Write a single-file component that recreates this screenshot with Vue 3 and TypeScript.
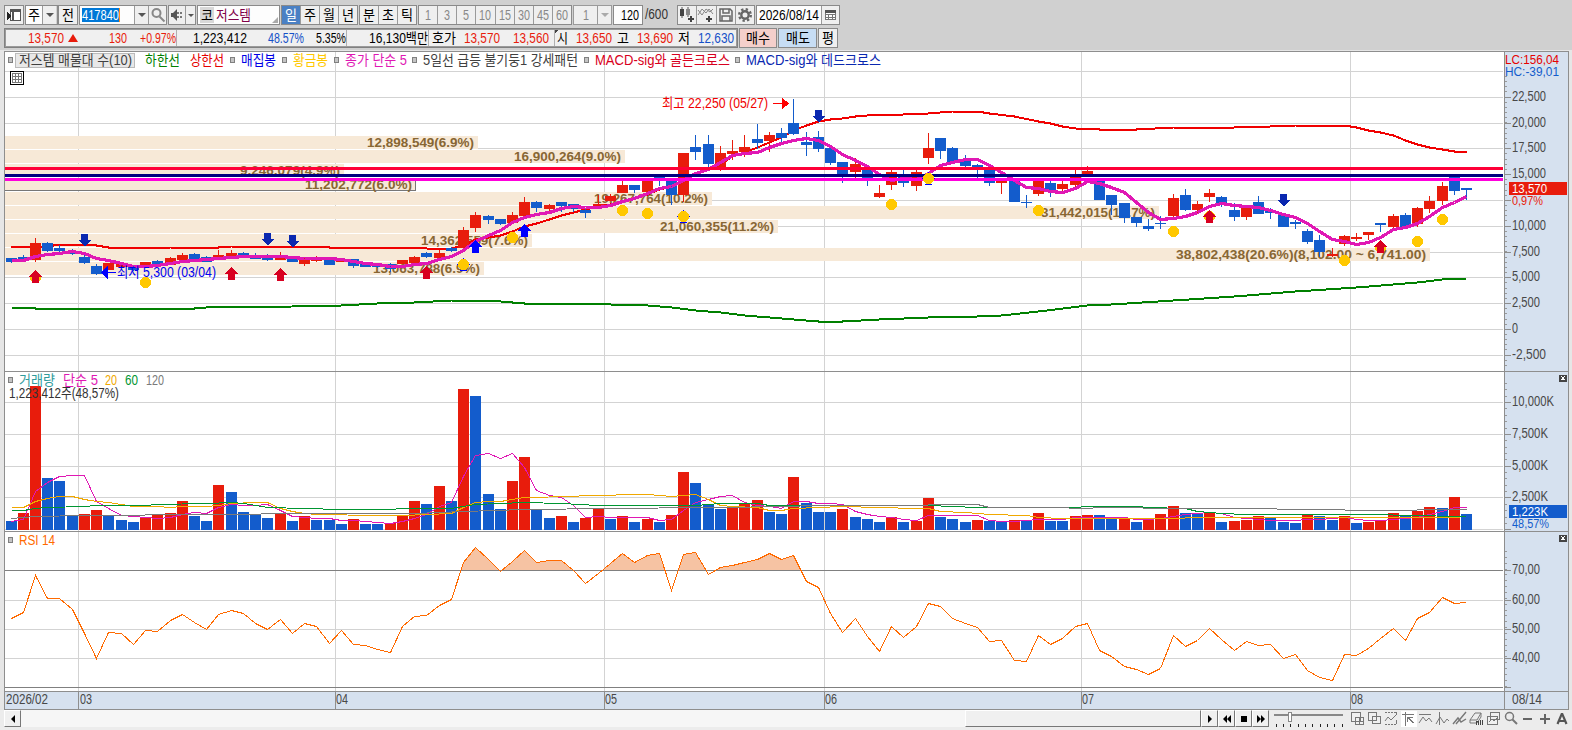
<script setup lang="ts">
import { h } from 'vue'

/* Single line of text fitted to an exact width, as the terminal's narrow bitmap font is. */
const Txt = (p: { t: string; w: number; s?: number }) =>
  h('svg', { width: p.w, height: 16, viewBox: `0 0 ${p.w} 16`, style: 'display:block;flex:none;overflow:visible' }, [
    h('text', { x: 0, y: 13, 'font-size': p.s ?? 14, fill: 'currentColor', textLength: p.w, lengthAdjust: 'spacingAndGlyphs' }, p.t),
  ])
Txt.props = ['t', 'w', 's']

const STEP = 12.232
const left = (i: number) => 6 + Math.floor(STEP * i)
const mid = (i: number) => left(i) + 5.5

type Candle = [string, number, number, number, number]
/* direction, high, body top, body bottom, low (chart y) */
const candles: Candle[] = `b258,258,262,263 b255,257,260,260 r238,243,260,262 b242,243,251,252 b245,248,251,254 b249,252,254,255
b255,257,263,264 b264,266,274,275 r263,263,270,270 r263,263,267,267 b266,266,270,271 r262,262,266,266 b260,261,264,265 r257,258,265,265
r253,255,260,260 b253,254,260,261 b256,257,262,262 r250,255,258,258 r250,253,258,258 b252,253,255,257 b253,255,259,259 b254,255,260,261
r252,256,260,260 b256,256,262,262 r257,257,264,266 r256,257,261,262 b259,259,265,265 r259,259,262,262 b259,259,266,268 b263,263,267,267
b264,265,267,268 b263,264,269,272 r260,260,264,264 r256,257,263,263 b252,253,257,258 r250,253,258,258 b247,248,251,252 r227,230,248,250
r212,215,228,232 b215,216,220,224 b219,219,224,225 r212,215,223,223 r197,202,216,217 b201,202,208,212 r204,205,209,212 b202,202,206,212
b204,204,209,212 b209,210,213,218 r195,204,206,207 r194,196,201,201 r181,185,193,193 b185,185,190,193 r181,181,192,192 b177,177,178,186
b180,181,195,205 r153,153,195,202 b135,147,152,160 b135,144,164,167 r146,153,168,171 r140,151,154,160 r135,147,152,157 b124,139,143,149
r132,135,141,152 b128,133,138,143 b99,123,134,135 b132,142,145,156 b131,137,149,152 b148,148,163,165 b162,162,176,183 r158,164,172,178
b170,170,178,186 r185,193,197,198 r169,172,185,190 b169,176,183,187 r169,172,186,191 r133,148,158,164 b138,138,151,159 b147,148,162,162
b155,161,166,168 b164,165,167,178 b168,168,183,186 r181,181,183,194 b181,181,202,202 b195,202,203,208 r178,181,194,196 b181,183,191,197
r181,184,189,192 r169,176,185,188 r166,171,174,177 b181,181,200,200 b195,195,205,215 b203,203,218,223 b217,217,223,227 b219,226,229,231
b216,223,224,229 r194,198,216,217 b189,195,210,211 r201,204,210,213 r189,193,197,202 b196,197,205,207 b203,210,217,221 r205,207,217,220
b196,202,214,214 b208,210,213,219 b214,215,227,227 b220,222,224,229 b229,231,242,244 b235,240,252,257 r248,254,256,257 r235,236,244,246
r233,237,239,241 r232,232,235,240 b223,223,225,232 r214,216,227,229 b213,215,227,227 r207,208,224,227 r196,201,209,213 r182,186,201,205
b175,177,191,195 b188,188,190,200`
  .split(/\s+/)
  .map((s) => [s[0], ...s.slice(1).split(',').map(Number)] as Candle)

const volumeTops = `521 513 386 478 481 516 514 510 515 520 522 517 515 513 501 516 521 485 492 512 514 518 514 521 516 520 520 524 519 524 524 523
515 501 504 486 501 389 396 494 509 481 457 510 518 516 522 518 508 519 516 522 519 522 515 472 483 504 509 507 504 500 512 514 477 503 512 512
509 517 519 522 517 522 521 498 517 519 522 520 521 522 520 520 513 521 521 516 515 515 519 518 522 519 514 506 513 514 512 522 521 520 516 518
522 523 515 516 520 516 523 522 520 513 515 511 507 508 497 514`
  .split(/\s+/)
  .map(Number)

/* "index:y index:y ..." -> polyline points */
const series = (s: string) =>
  s.trim().split(/\s+/).map((p) => { const [i, y] = p.split(':').map(Number); return `${mid(i)},${y + 0.5}` }).join(' ')
const dense = (s: string) => s.trim().split(/\s+/).map(Number)
const path = (a: number[]) => a.map((y, i) => `${mid(i)},${y + 0.5}`).join(' ')

const ma5 = path(dense(`260 260 256 254 253 251 253 258 260 263 266 266 265 263 261 260 259 258 257 256 256 256 256 257 258 258 258 259 261 263
264 266 266 264 263 259 256 250 241 235 230 222 217 214 212 208 206 207 207 205 201 198 193 188 186 180 173 169 162 155 153 152 147 143 140 138
140 146 154 160 166 174 180 178 179 173 165 162 159 159 165 172 180 187 188 191 192 188 181 183 187 192 202 212 219 218 216 212 206 203 205 206
207 210 214 217 223 231 239 241 244 242 237 229 227 223 216 207 202 196`))
const upper = series(`0:247 3:246 4:244 6:244 7:245 8:247 10:247 11:248 13:247 17:247 18:246 25:246 26:247 31:247 34:248 35:249 36:248 37:245 38:239
39:237 40:235 41:231 42:226 43:223 44:219 45:215 46:212 47:209 48:206 49:204 50:201 51:198 52:194 53:189 54:186 55:181 56:173 57:169 58:164 59:156
60:152 61:147 62:142 63:137 64:130 65:125 66:121 67:119 68:118 69:116 70:115 73:114 75:113 77:111 79:111 80:113 82:116 84:121 85:123 86:126 87:128
89:129 92:129 95:127 100:127 103:126 105:125 109:125 110:127 111:130 112:132 113:135 114:140 115:144 116:147 117:149 118:151 119:151`)
const lower = series(`0:307 1:307 2:308 15:308 16:307 23:306 27:305 30:303 33:302 36:300 38:300 40:301 42:303 47:303 49:304 52:305 54:307 56:310
58:312 60:315 62:317 64:319 66:321 68:321 71:319 75:317 79:316 81:315 84:311 88:305 90:304 95:300 100:296 105:291 110:287 115:282 117:279 119:278`)
const vma5 = path(dense(`521 519 491 482 476 475 475 501 508 515 516 517 518 517 514 512 513 507 504 505 505 504 510 516 517 518 518 520 520 521
522 523 521 518 514 506 502 476 455 453 458 453 467 490 495 497 505 517 516 517 517 517 517 520 519 510 502 499 496 495 502 505 506 508 501 501
503 503 504 511 514 516 517 519 520 515 515 515 515 515 520 521 521 520 519 519 519 517 517 517 517 517 519 519 518 516 514 513 512 513 517 518
519 520 520 520 519 519 518 517 519 520 520 519 518 517 514 511 507 507`))
const vma20 = series(`0:507 1:507 2:501 3:498 4:496 5:496 6:499 7:501 8:502 9:504 10:506 12:506 13:507 14:506 16:506 17:505 18:503 20:502 21:502
22:508 23:511 24:513 25:514 30:515 32:515 36:513 37:507 38:502 39:501 40:501 41:499 42:497 46:496 47:495 52:494 53:495 54:496 56:494 57:499 58:505
59:506 61:507 62:510 63:510 64:508 66:507 68:506 74:508 75:508 76:511 78:512 80:514 83:515 84:517 86:518 95:518 97:517 113:517 118:517 119:516`)
const vma60 = series(`0:510 1:510 2:508 3:507 6:506 7:505 11:505 12:504 16:503 18:502 19:503 20:505 21:507 24:508 27:509 36:508 38:504 42:502 45:503
48:505 56:505 58:503 61:503 62:505 66:505 75:505 79:507 87:507 88:506 92:506 93:507 96:508 97:511 99:513 101:514 112:514 114:515 119:516`)
const vma120 = series(`0:518 2:516 6:515 16:514 25:513 33:513 37:511 42:509 49:508 57:507 64:506 65:505 74:505 76:504 79:504 80:507 86:507 87:508
90:507 95:508 103:508 104:509 108:509 110:510 114:510 116:509 119:509`)
const rsiValues = dense(`618 612 575 598 598 609 633 658 632 633 644 630 631 620 614 622 629 614 610 613 623 629 619 633 623 626 643 630 644 645 649
652 626 616 615 605 599 562 547 559 571 561 550 562 560 560 570 583 573 563 553 562 555 553 590 554 552 574 567 565 562 559 553 559 555 581 587 613
632 618 636 651 626 637 626 603 606 618 623 627 641 640 660 661 635 644 638 626 623 650 656 666 669 674 668 635 646 640 628 639 650 641 645 644 658
654 670 677 680 654 655 648 638 628 640 618 612 597 603 602`)
const rsi = path(rsiValues)
const rsiArea = `${mid(0)},760 ${rsi} ${mid(119)},760`

const bands: [number, number, string, number, number][] = [
  [136, 478, '12,898,549(6.9%)', 367, 107],
  [150, 625, '16,900,264(9.0%)', 514, 107],
  [164, 344, '9,246,079(4.9%)', 240, 100],
  [178, 415, '11,202,772(6.0%)', 305, 107],
  [192, 712, '19,267,764(10.2%)', 594, 114],
  [206, 1159, '31,442,015(16.7%)', 1041, 114],
  [220, 778, '21,060,355(11.2%)', 660, 114],
  [234, 532, '14,362,559(7.6%)', 421, 107],
  [248, 1430, '38,802,438(20.6%)(8,102.00 ~ 6,741.00)', 1176, 250],
  [262, 484, '13,063,788(6.9%)', 373, 107],
]
const dots: [number, number][] = [[2, 277], [98, 216], [112, 247], [11, 282], [37, 264], [41, 237], [50, 210], [52, 213], [55, 216], [72, 204], [75, 178], [84, 210], [95, 231], [109, 260], [115, 241], [117, 219]]
const dotShadows: [number, number][] = [[37, 264], [55, 216], [75, 178]]
const ups: [number, number, string][] = [[2, 270, 'gold'], [18, 267, 'gold'], [22, 268, 'gold'], [34, 266, 'gold'], [98, 210, 'gold'], [112, 240, 'gold'], [38, 240, 'buy'], [42, 224, 'buy']]
const downs: [number, number][] = [[6, 234], [21, 233], [23, 235], [66, 110], [104, 194]]
const verticals = [78, 335, 604, 824, 1081, 1350]
const months: [number, string][] = [[80, '03'], [336, '04'], [605, '05'], [825, '06'], [1082, '07'], [1351, '08']]
const priceAxis: [number, string][] = [[97, '22,500'], [123, '20,000'], [148, '17,500'], [174, '15,000'], [200, ''], [226, '10,000'], [252, '7,500'], [277, '5,000'], [303, '2,500'], [329, '0'], [355, '-2,500']]
const volAxis: [number, string][] = [[402, '10,000K'], [434, '7,500K'], [466, '5,000K'], [497, '2,500K'], [529, '']]
const rsiAxis: [number, string][] = [[570, '70,00'], [600, '60,00'], [629, '50,00'], [658, '40,00'], [687, '']]
const steps = (a: number, b: number, d: number) => Array.from({ length: Math.floor((b - a) / d) + 1 }, (_, i) => Math.round(a + i * d))
const minorTicks = [...steps(76, 367, 5.16), ...steps(383, 525, 6.36), ...steps(551, 687, 5.85)]
const labelWidth = (t: string) => [...t].reduce((n, c) => n + (c === ',' ? 4 : c === 'K' ? 8 : 6), 0)

const legend: [number, number, string, string][] = [
  [19, 113, '저스템 매물대 수(10)', '#404040'], [145, 35, '하한선', '#008000'], [190, 34, '상한선', '#e60000'], [241, 35, '매집봉', '#0000e6'],
  [293, 35, '황금봉', '#ffc800'], [345, 62, '종가 단순 5', '#e018b4'], [423, 155, '5일선 급등 불기둥1 강세패턴', '#404040'],
  [595, 135, 'MACD-sig와 골든크로스', '#d80020'], [746, 135, 'MACD-sig와 데드크로스', '#0a28b0'],
]
const squares: [number, number][] = [[8, 57], [230, 57], [282, 57], [334, 57], [412, 57], [584, 57], [735, 57], [8, 377], [8, 537]]
const volLegend: [number, number, string, string][] = [[19, 36, '거래량', '#2f9c9c'], [63, 35, '단순 5', '#e018b4'], [105, 12, '20', '#f0a800'], [125, 13, '60', '#009632'], [146, 18, '120', '#7a7a7a']]
const minutes = ['1', '3', '5', '10', '15', '30', '45', '60']
</script>

<template>
  <div class="app">
    <header class="tools">
      <div class="row">
        <div class="grp btn w20">
          <svg width="18" height="18" shape-rendering="crispEdges"><path d="M5.500 4.500h10v10h-10z" fill="#fff" stroke="#555" /><path d="M5 3h11v3H5zM7 3h2v12H7z" fill="#555" /><path d="M2 6l5 4-5 4z" fill="#222" /></svg>
        </div>
        <div class="grp m1 w33"><span class="cell white w17"><Txt t="주" :w="12" /></span><span class="cell btn w14"><i class="dn" /></span></div>
        <div class="grp btn w20"><Txt t="전" :w="12" /></div>
        <div class="grp m1 w87">
          <span class="cell white code"><span class="sel"><Txt t="417840" :w="37" /></span></span>
          <span class="cell btn w14"><i class="dn" /></span>
          <span class="cell btn w18"><svg width="16" height="16" fill="none" stroke="#888" stroke-width="2"><circle cx="6.500" cy="6" r="4" /><path d="M9.500 9.500l5 5" /></svg></span>
        </div>
        <div class="grp m2 w27">
          <span class="cell btn w17"><svg width="16" height="16"><path d="M2 6h2l4-4v12l-4-4H2z" fill="#555" /><path d="M9 5v2M12 5v2M9 9v2M12 9v2" stroke="#777" stroke-width="2" /></svg></span>
          <span class="cell btn w10"><i class="dn small" /></span>
        </div>
        <div class="grp white m2 name"><span class="kosdaq"><Txt t="코" :w="12" /></span><Txt class="maroon" t="저스템" :w="35" /><i class="corner" /></div>
        <div class="grp m1 w77"><span class="cell btn on"><Txt t="일" :w="12" /></span><span v-for="p in ['주', '월', '년']" :key="p" class="cell btn"><Txt :t="p" :w="12" /></span></div>
        <div class="grp m1 w58"><span v-for="p in ['분', '초', '틱']" :key="p" class="cell btn"><Txt :t="p" :w="12" /></span></div>
        <div class="grp m1 w154"><span v-for="m in minutes" :key="m" class="cell btn dim"><Txt :t="m" :w="m.length * 6" /></span></div>
        <div class="grp m1 w39 dim"><span class="cell btn"><Txt t="1" :w="6" /></span><span class="cell btn w14"><i class="dn pale" /></span></div>
        <div class="grp white m1 w30 end"><Txt t="120" :w="18" /></div>
        <Txt class="total" t="/600" :w="23" />
        <div class="grp tray">
          <span class="cell btn"><svg width="18" height="18"><path d="M4 1v11M10 1v10" stroke="#555" /><path d="M2 3h4v7H2z" fill="#444" /><path d="M8 3h4v6H8z" fill="#888" /><path d="M10 13h6M13 10v6" stroke="#444" stroke-width="2" /></svg></span>
          <span class="cell btn"><svg width="18" height="18" fill="none" stroke="#888"><path d="M1 9l4-6 4 4 3-4 4 5M1 4l4 5 4-6 4 3 3-3" /><path d="M9 13h6M12 10v6" stroke="#444" stroke-width="2" /></svg></span>
          <span class="cell btn"><svg width="16" height="16" fill="none" stroke="#666" stroke-width="1.500"><path d="M2 2h10l2 2v10H2zM5 2v4h6V2M4 14V9h8v5" /></svg></span>
          <span class="cell btn"><svg width="16" height="16" fill="none" stroke="#666"><circle cx="8" cy="8" r="5.800" stroke-width="2.400" stroke-dasharray="2.300 2.250" /><circle cx="8" cy="8" r="3.700" stroke-width="2.400" /></svg></span>
        </div>
        <div class="grp m1 w84">
          <span class="cell white date"><Txt t="2026/08/14" :w="60" /></span>
          <span class="cell btn"><svg width="12" height="12" shape-rendering="crispEdges"><path d="M.5 2.500h10v8H.5zM.5 5.500h10M.5 8.500h10M3.500 5v6M7.500 5v6" fill="#fff" stroke="#777" /><path d="M0 1h11v3H0z" fill="#555" /></svg></span>
        </div>
      </div>

      <div class="row">
        <div class="quote">
          <span class="q q1 up"><Txt t="13,570" :w="36" /><i class="tri" /></span>
          <span class="q q2 up"><Txt t="130" :w="18" /></span>
          <span class="q q3 up line"><Txt t="+0.97%" :w="36" /></span>
          <span class="q q4"><Txt t="1,223,412" :w="54" /></span>
          <span class="q q5 down"><Txt t="48.57%" :w="36" /></span>
          <span class="q q6 line"><Txt t="5.35%" :w="30" /></span>
          <span class="q q7 line"><Txt t="16,130백만" :w="59" /></span>
          <span class="q q8"><Txt t="호가" :w="24" /></span>
          <span class="q q9 up"><Txt t="13,570" :w="36" /></span>
          <span class="q q10 up line"><Txt t="13,560" :w="36" /></span>
          <span class="q q11 mark"><Txt t="시" :w="11" /></span>
          <span class="q q12 up"><Txt t="13,650" :w="36" /></span>
          <span class="q q13"><Txt t="고" :w="12" /></span>
          <span class="q q14 up"><Txt t="13,690" :w="36" /></span>
          <span class="q q15"><Txt t="저" :w="12" /></span>
          <span class="q q16 down"><Txt t="12,630" :w="36" /></span>
        </div>
        <div class="grp act buy"><Txt t="매수" :w="24" /></div>
        <div class="grp act sell"><Txt t="매도" :w="24" /></div>
        <div class="grp act btn w20"><Txt t="평" :w="12" /></div>
      </div>
    </header>

    <svg class="chart" width="1572" height="660" viewBox="0 50 1572 660">
      <defs>
        <clipPath id="over"><rect x="5" y="532" width="1498" height="38" /></clipPath>
      </defs>
      <g shape-rendering="crispEdges">
        <rect x="0" y="50" width="1572" height="660" fill="#e6e6e6" />
        <rect x="5" y="52" width="1564" height="640" fill="#fff" />
        <rect x="1504" y="52" width="65" height="640" fill="#d6e1ef" />
        <rect x="5" y="692" width="1564" height="18" fill="#d6e1ef" />
        <g fill="#d3d3d3">
          <rect x="5" y="71" width="1498" height="1" />
          <rect v-for="[y] in [...priceAxis, ...volAxis, ...rsiAxis]" :key="y" x="5" :y="y" width="1498" height="1" />
          <rect v-for="x in verticals" :key="x" :x="x" y="52" width="1" height="640" />
        </g>
        <rect v-for="b in bands" :key="b[0]" x="5" :y="b[0] - 1" :width="b[1] - 5" height="15" fill="#fff" />
        <g fill="#d3d3d3"><rect v-for="x in verticals" :key="x" :x="x" y="135" width="1" height="141" /></g>
        <rect v-for="b in bands" :key="b[0]" x="5" :y="b[0]" :width="b[1] - 5" height="13" fill="#f7e9d7" />
        <path d="M5 190.500H415.500V180" fill="none" stroke="#777" />
      </g>
      <text v-for="b in bands" :key="b[0]" class="vp" :x="b[3]" :y="b[0] + 11" :textLength="b[4]" lengthAdjust="spacingAndGlyphs">{{ b[2] }}</text>

      <g shape-rendering="crispEdges">
        <polyline :points="lower" fill="none" stroke="#008000" stroke-width="2" />
        <polyline :points="upper" fill="none" stroke="#f00000" stroke-width="2" />
        <g v-for="(c, i) in candles" :key="i" :fill="c[0] === 'r' ? '#e81c0c' : '#135ccc'">
          <rect :x="left(i) + 5" :y="c[1]" width="1" :height="c[4] - c[1]" />
          <rect :x="left(i)" :y="c[2]" width="11" :height="c[3] - c[2]" />
        </g>
        <polyline :points="ma5" fill="none" stroke="#e018b4" stroke-width="3.200" stroke-linejoin="round" />
        <g>
          <rect x="5" y="167" width="1498" height="3" fill="#ff0038" />
          <rect x="5" y="174" width="1498" height="3" fill="#000080" />
          <rect x="5" y="178" width="1498" height="3" fill="#ff00dc" />
        </g>
        <path v-for="d in dotShadows" :key="d[0]" :transform="`translate(${mid(d[0])} ${d[1]})`" d="M-6.500 .5h13M-3.500 6h7M0-6v2" stroke="#00f" />
        <circle v-for="d in dots" :key="d[0]" :cx="mid(d[0])" :cy="d[1] + 0.5" r="5.500" fill="#ffc800" />
        <path v-for="u in ups" :key="u[0]" :transform="`translate(${mid(u[0])} ${u[1]})`" d="M0 0L6.500 6.500H3.500V13H-3.500V6.500H-6.500z" :fill="u[2] === 'buy' ? '#00f' : '#d80020'" />
        <path v-for="d in downs" :key="d[0]" :transform="`translate(${mid(d[0])} ${d[1]})`" d="M-3.500 0H3.500V6H6.500L0 12.500L-6.500 6H-3.500z" fill="#0a28b0" />
        <path d="M107 272.500h9M102 272.500l5.500-5.500v11z" stroke="#00f" fill="#00f" stroke-width="1" />
        <path d="M773 103.500h10M788 103.500l-5.500-5v10z" stroke="#f00" fill="#f00" />
      </g>
      <text x="117" y="277" textLength="99" class="fit" fill="#0000f0" lengthAdjust="spacingAndGlyphs">최저 5,300 (03/04)</text>
      <text x="662" y="108" textLength="106" class="fit" fill="#f00000" lengthAdjust="spacingAndGlyphs">최고 22,250 (05/27)</text>

      <g shape-rendering="crispEdges">
        <rect v-for="(y, i) in volumeTops" :key="i" :x="left(i)" :y="y" width="11" :height="530 - y" :fill="i > 0 && y < volumeTops[i - 1] ? '#e81c0c' : '#135ccc'" />
        <g fill="none">
          <polyline :points="vma5" stroke="#e018b4" /><polyline :points="vma20" stroke="#f0a800" />
          <polyline :points="vma60" stroke="#009632" /><polyline :points="vma120" stroke="#7a7a7a" />
        </g>
        <polygon :points="rsiArea" fill="#f6c3a3" clip-path="url(#over)" />
        <path d="M5 570.500H1503M5 687.500H1503" stroke="#808080" />
        <polyline :points="rsi" fill="none" stroke="#ff6a00" />

        <path d="M4.500 710V51.500H1569M5 371.500H1569M5 531.500H1569M5 691.500H1569M5 709.500H1569M1504.500 51V710M1568.500 51V710" fill="none" stroke="#8e8e8e" />
        <path v-for="x in verticals" :key="x" :d="`M${x + 0.5} 691v18`" stroke="#8e8e8e" />
        <rect v-for="y in minorTicks" :key="y" x="1505" :y="y" width="2" height="1" fill="#999" />
        <rect v-for="[y] in [...priceAxis, ...volAxis, ...rsiAxis]" :key="y" x="1505" :y="y" width="6" height="1" fill="#8e8e8e" />
        <rect x="15.500" y="53.500" width="119" height="14" fill="#e8e8e8" stroke="#bbb" />
        <rect v-for="s in squares" :key="`${s[0]}-${s[1]}`" :x="s[0] + 0.500" :y="s[1] + 0.500" width="4" height="5" fill="#c4c4c4" stroke="#808080" />
        <path d="M10.500 71.500h13v13h-13z" fill="#fff" stroke="#000" />
        <path d="M12.500 73.500h9v9h-9zM12.500 76.500h9M12.500 79.500h9M15.500 73.500v9M18.500 73.500v9" fill="none" stroke="#777" />
        <rect x="1509" y="182" width="58" height="13" fill="#e81c0c" />
        <rect x="1509" y="505" width="58" height="13" fill="#135ccc" />
        <g v-for="y in [375, 535]" :key="y"><rect x="1559" :y="y" width="8" height="7" fill="#444" /><path :d="`M1561.500 ${y + 1.5}l3 3.500M1564.500 ${y + 1.5}l-3 3.500`" stroke="#fff" /></g>
      </g>

      <g class="fit">
        <text v-for="l in legend" :key="l[0]" :x="l[0]" y="65" :textLength="l[1]" lengthAdjust="spacingAndGlyphs" :fill="l[3]">{{ l[2] }}</text>
        <text v-for="l in volLegend" :key="l[0]" :x="l[0]" y="385" :textLength="l[1]" lengthAdjust="spacingAndGlyphs" :fill="l[3]">{{ l[2] }}</text>
        <text x="9" y="398" textLength="110" lengthAdjust="spacingAndGlyphs" fill="#333">1,223,412주(48,57%)</text>
        <text x="19" y="545" textLength="36" lengthAdjust="spacingAndGlyphs" fill="#ff6a00">RSI 14</text>
        <g fill="#484848">
          <template v-for="[y, t] in [...priceAxis, ...volAxis, ...rsiAxis]" :key="y">
            <text v-if="t" x="1512" :y="y + 4" :textLength="labelWidth(t)" lengthAdjust="spacingAndGlyphs">{{ t }}</text>
          </template>
          <text x="6" y="704" textLength="42" lengthAdjust="spacingAndGlyphs">2026/02</text>
          <text v-for="m in months" :key="m[0]" :x="m[0]" y="704" textLength="12" lengthAdjust="spacingAndGlyphs">{{ m[1] }}</text>
          <text x="1512" y="704" textLength="30" lengthAdjust="spacingAndGlyphs">08/14</text>
        </g>
      </g>
      <g class="tag">
        <text x="1505" y="64" textLength="54" lengthAdjust="spacingAndGlyphs" fill="#e60000">LC:156,04</text>
        <text x="1505" y="76" textLength="54" lengthAdjust="spacingAndGlyphs" fill="#135ccc">HC:-39,01</text>
        <text x="1512" y="193" textLength="35" lengthAdjust="spacingAndGlyphs" fill="#fff">13,570</text>
        <text x="1512" y="205" textLength="31" lengthAdjust="spacingAndGlyphs" fill="#e81c0c">0,97%</text>
        <text x="1512" y="516" textLength="36" lengthAdjust="spacingAndGlyphs" fill="#fff">1,223K</text>
        <text x="1512" y="528" textLength="37" lengthAdjust="spacingAndGlyphs" fill="#135ccc">48,57%</text>
      </g>
    </svg>

    <footer class="bar">
      <span class="sb"><svg width="8" height="8"><path d="M6 0v8L2 4z" /></svg></span>
      <span class="track"><span class="thumb" /></span>
      <span class="sb"><svg width="8" height="8"><path d="M2 0v8l4-4z" /></svg></span>
      <span class="sb"><svg width="10" height="8"><path d="M5 0v8L1 4zM9 0v8L5 4z" /></svg></span>
      <span class="sb"><svg width="8" height="8"><path d="M1 1h6v6H1z" /></svg></span>
      <span class="sb"><svg width="10" height="8"><path d="M1 0v8l4-4zM5 0v8l4-4z" /></svg></span>
      <svg class="slider" width="74" height="20" shape-rendering="crispEdges">
        <path d="M5 5h69" stroke="#888" stroke-width="2" />
        <path v-for="i in 10" :key="i" :d="`M${i * 7.3}  14v3`" stroke="#222" />
        <rect x="19.500" y="2.500" width="3" height="9" fill="#fff" stroke="#888" />
      </svg>
      <svg class="icons" width="228" height="20" fill="none" stroke="#777" shape-rendering="crispEdges">
        <rect x="58" y="1" width="16" height="16" fill="#fff" stroke="none" />
        <path d="M8.500 2.500h9v9h-9zM12.500 7.500h8v7h-8zM12.500 11h8M16.500 7.500v7" fill="#f0f0f0" />
        <path d="M25.500 2.500h8v8h-8zM29.500 6.500h8v7h-8z" fill="#f0f0f0" stroke-width="1.300" />
        <path d="M42 2.500h12M42 14.500h12" stroke-dasharray="2 1" /><path d="M42 11l3-4 3 3 5-5" shape-rendering="auto" /><path d="M53.500 2v3M53.500 10v4" />
        <path d="M59 4.500h12M62.500 2v14" /><path d="M64.500 7l6 6M64.500 7v5M64.500 7.500h5" stroke-width="1.400" />
        <path d="M76 4.500h12" /><path d="M76 13l4-6 3 4 3-3 3 4" shape-rendering="auto" />
        <path d="M96.500 2v13" /><path d="M93 14l4-7 4 6 3-4 2 2" shape-rendering="auto" />
        <path d="M110 14l5-6 3 4 5-3M113 14l10-12" shape-rendering="auto" stroke-width="1.400" />
        <path d="M127 10l5-7h6l-4 7zM127 10v3h7l4-6V3" shape-rendering="auto" /><path d="M133.500 15v-4h2v4M137.500 10v5M139.500 10v5" stroke="#444" />
        <path d="M147.500 2.500h9v7h-9zM144.500 6.500h10v8h-10z" fill="#f0f0f0" /><path d="M146 12l3-3 2 2 3-3" />
        <g shape-rendering="auto"><circle cx="166.500" cy="6.500" r="4" stroke-width="1.500" /><path d="M169.500 9.500l4.500 4.500" stroke-width="2" /></g>
        <path d="M180 9h9M197 9h10M202 4v10" stroke="#666" stroke-width="2" />
        <path d="M214.500 14l4.200-10h.6l4.200 10M216 11h6" stroke="#555" stroke-width="2.200" shape-rendering="auto" />
      </svg>
    </footer>
  </div>
</template>

<style>
body { margin: 0; background: #e6e6e6; }
</style>

<style scoped>
.app { width: 1572px; height: 730px; display: flex; flex-direction: column; overflow: hidden; background: #e6e6e6; font-family: "Liberation Sans", "Noto Sans CJK KR", sans-serif; color: #000; }
.tools { height: 45px; padding: 5px 0 0 4px; background: #d0d0d0; display: flex; flex-direction: column; gap: 3px; }
.row { display: flex; height: 20px; align-items: stretch; }
.grp { box-sizing: border-box; flex: none; display: flex; border: 1px solid #8a8a8a; align-items: stretch; }
.grp > svg { margin: auto; }
.cell { flex: 1; display: flex; align-items: center; justify-content: center; box-sizing: border-box; }
.cell + .cell { border-left: 1px solid #9a9a9a; }
.cell[class*="w1"] { flex: none; }
.btn { background: #efefef; }
.white { background: #fdfdfd; }
.on { background: #4a80c4; color: #fff; }
.dim { color: #888; }
.dim.grp { border-color: #9a9a9a; }
.w10 { width: 10px; } .w14 { width: 14px; } .w17 { width: 16px; } .w18 { width: 18px; } .w20 { width: 20px; } .w27 { width: 28px; } .w30 { width: 30px; }
.w33 { width: 33px; } .w39 { width: 39px; } .w58 { width: 58px; } .w77 { width: 77px; } .w84 { width: 84px; } .w87 { width: 88px; } .w154 { width: 154px; }
.m1 { margin-left: 1px; } .m2 { margin-left: 1px; }
.code { justify-content: flex-start; padding-left: 2px; }
.sel { background: #0078d7; color: #fff; height: 14px; display: flex; align-items: center; border-right: 1px solid #ff8c1a; }
.dn { width: 0; border: 4px solid transparent; border-top-color: #555; border-bottom: 0; }
.dn.small { border-width: 3px; border-bottom: 0; }
.dn.pale { border-top-color: #aaa; }
.name { width: 83px; align-items: center; position: relative; }
.name > svg { margin: 0 0 0 2px; }
.kosdaq { background: #d8d8d8; padding: 0 1px; margin-left: 2px; height: 16px; }
.maroon { color: #800048; }
.corner { position: absolute; right: 1px; bottom: 1px; border: 3px solid transparent; border-right-color: #aaa; border-bottom-color: #aaa; }
.end { align-items: center; }
.end > svg { margin: 0 3px 0 auto; }
.total { margin: 1px 9px 0 2px; color: #333; }
.tray { width: 78px; }
.date { flex: none; width: 64px; }

.quote { box-sizing: border-box; width: 734px; border: 1px solid #808080; outline: 1px solid #9a9a9a; outline-offset: -2px; background: #f0f0f0; display: flex; }
.q { flex: none; box-sizing: border-box; display: flex; align-items: center; justify-content: flex-end; }
.line { border-right: 1px solid #b0b0b0; }
.up { color: #e81c0c; } .down { color: #1450c8; }
.q1 { width: 73px; gap: 4px; } .q2 { width: 49px; } .q3 { width: 50px; } .q4 { width: 70px; } .q5 { width: 57px; } .q6 { width: 43px; } .q7 { width: 82px; }
.q8 { width: 27px; } .q9 { width: 44px; } .q10 { width: 55px; padding-right: 5px; } .q11 { width: 13px; } .q12 { width: 44px; } .q13 { width: 17px; } .q14 { width: 44px; } .q15 { width: 17px; } .q16 { width: 44px; }
.mark { background: linear-gradient(135deg, #444 3px, transparent 3px); }
.tri { border: 5px solid transparent; border-bottom: 8px solid #e81c0c; border-top: 0; }
.act { margin-left: 1px; border-width: 1px; }
.buy { width: 38px; background: #f5cfcb; } .sell { width: 39px; background: #c7ddf4; }

.chart { display: block; flex: none; font-size: 14px; }
.fit { font-size: 14px; }
.tag { font-size: 12.5px; }
.vp { font-size: 13px; font-weight: bold; fill: #886633; }

.bar { height: 20px; display: flex; align-items: flex-start; padding-left: 4px; background: #ececec; }
.sb { box-sizing: border-box; width: 17px; height: 17px; flex: none; background: #f0f0f0; border: 1px solid #fff; border-right-color: #777; border-bottom-color: #777; display: flex; align-items: center; justify-content: center; }
.track { width: 1180px; height: 17px; display: flex; justify-content: flex-end; background: #f6f6f6; }
.thumb { box-sizing: border-box; width: 236px; height: 17px; background: #f0f0f0; border: 1px solid #fff; border-right-color: #777; border-bottom-color: #777; }
.slider { flex: none; }
.icons { flex: none; }
</style>
